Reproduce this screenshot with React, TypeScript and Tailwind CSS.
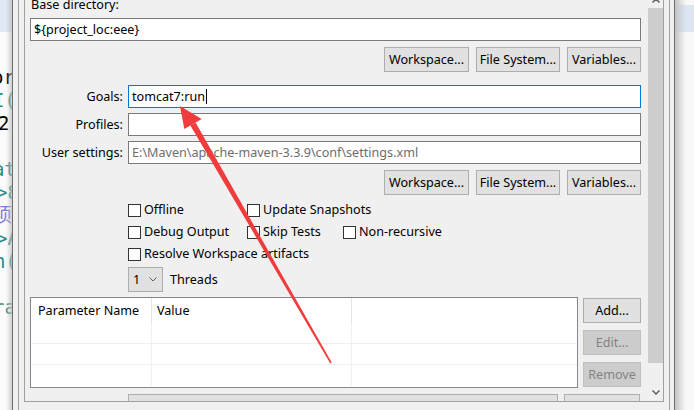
import React from "react";

const editorLines: Array<{ text: string; color: string; offset: string }> = [
  { text: "or", color: "text-black", offset: "ml-[-8px]" },
  { text: "I(", color: "text-[#2a8c8c]", offset: "ml-[-7px]" },
  { text: "2", color: "text-black", offset: "ml-[-2px]" },
  { text: "", color: "text-black", offset: "ml-0" },
  { text: "at", color: "text-[#2a8c8c]", offset: "ml-[-7px]" },
  { text: ">8", color: "text-[#2a8c8c]", offset: "ml-[-4px]" },
  { text: "项", color: "text-[#7b7bd8]", offset: "ml-[-7px]" },
  { text: ">A", color: "text-[#2a8c8c]", offset: "ml-[-4px]" },
  { text: "n(", color: "text-[#2a8c8c]", offset: "ml-[-6px]" },
  { text: "", color: "text-black", offset: "ml-0" },
  { text: "ra", color: "text-[#5a8c8c]", offset: "ml-[-7px]" },
];

const Button = ({
  label,
  className,
  disabled,
}: {
  label: string;
  className: string;
  disabled?: boolean;
}) => (
  <div
    className={`h-[25px] border flex items-center justify-center ${className} ${
      disabled
        ? "bg-[#cccccc] border-[#bfbfbf] text-[#838383]"
        : "bg-[#e1e1e1] border-[#adadad] text-black"
    }`}
  >
    {label}
  </div>
);

const Checkbox = ({ label }: { label: string }) => (
  <div className="flex items-center h-[22px]">
    <span className="w-[13px] h-[13px] border border-[#333333] bg-white shrink-0" />
    <span className="ml-[3px] whitespace-nowrap">{label}</span>
  </div>
);

const BrowseRow = () => (
  <div className="flex justify-end gap-[7px] mt-[6px]">
    <Button label="Workspace..." className="w-[85px]" />
    <Button label="File System..." className="w-[84px]" />
    <Button label="Variables..." className="w-[74px]" />
  </div>
);

const FieldRow = ({
  label,
  value,
  focused,
  muted,
  className,
}: {
  label: string;
  value?: string;
  focused?: boolean;
  muted?: boolean;
  className: string;
}) => (
  <div className={`flex items-center gap-[5px] ${className}`}>
    <div className="w-[93px] text-right whitespace-nowrap">{label}</div>
    <div
      className={`flex-1 h-[23px] border bg-white flex items-center px-[3px] ${
        focused ? "border-[#0078d7]" : "border-[#7a7a7a]"
      } ${muted ? "text-[#6d6d6d]" : "text-black"}`}
    >
      <span className="whitespace-nowrap">{value}</span>
      {focused && <span className="w-[1px] h-[15px] bg-black ml-[1px]" />}
    </div>
  </div>
);

const TableRow = ({ border }: { border?: boolean }) => (
  <div className={`flex h-[21px] ${border ? "border-b border-[#f0f0f0]" : ""}`}>
    <div className="w-[121px] border-r border-[#eef0f4]" />
    <div className="w-[200px] border-r border-[#eef0f4]" />
    <div className="flex-1" />
  </div>
);

export default function App() {
  return (
    <div className="relative w-[694px] h-[410px] overflow-hidden flex bg-[#f0f0f0] text-[12.6px] leading-[16px] text-black font-['Noto_Sans','Liberation_Sans',sans-serif]">
      {/* editor behind the dialog, left */}
      <div className="relative w-[12px] h-[410px] overflow-hidden bg-[#fbfbfb] shrink-0">
        <div className="h-[32px] bg-[#dfe8f4]" />
        <div className="pt-[34px] font-['DejaVu_Sans_Mono','Noto_Sans_CJK_SC',monospace] text-[19px]">
          {editorLines.map((l, i) => (
            <div key={i} className={`h-[23px] leading-[23px] whitespace-nowrap ${l.offset} ${l.color}`}>
              {l.text}
            </div>
          ))}
        </div>
        <div className="absolute inset-y-0 right-0 w-[6px] bg-gradient-to-r from-transparent to-[#bdbdbd]/70" />
      </div>

      {/* dialog frame */}
      <div className="w-[663px] h-[410px] shrink-0 border-l border-r border-[#6e6e6e] pl-[5px] pr-[4px]">
        <div className="h-[410px] border-l border-r border-[#a0a0a0] px-[5px]">
          <div className="h-[402px] border-l border-r border-b border-[#a0a0a0] flex overflow-hidden">
            {/* scrolled content */}
            <div className="flex-1 pl-[5px] pr-[6px] overflow-hidden">
              <div className="h-[16px] mt-[-3px] ml-[1px] whitespace-nowrap">Base directory:</div>
              <div className="h-[23px] mt-[5px] border border-[#7a7a7a] bg-white flex items-center px-[3px]">
                {"${project_loc:eee}"}
              </div>
              <BrowseRow />

              <FieldRow label="Goals:" value="tomcat7:run" focused className="mt-[13px]" />
              <FieldRow label="Profiles:" className="mt-[5px]" />
              <FieldRow
                label="User settings:"
                value="E:\Maven\apache-maven-3.3.9\conf\settings.xml"
                muted
                className="mt-[5px]"
              />
              <BrowseRow />

              <div className="mt-[4px] ml-[98px] grid grid-cols-[119px_96px_1fr]">
                <Checkbox label="Offline" />
                <Checkbox label="Update Snapshots" />
                <div />
                <Checkbox label="Debug Output" />
                <Checkbox label="Skip Tests" />
                <Checkbox label="Non-recursive" />
                <div className="col-span-3">
                  <Checkbox label="Resolve Workspace artifacts" />
                </div>
              </div>

              <div className="mt-[2px] ml-[98px] flex items-center">
                <div className="w-[35px] h-[25px] border border-[#adadad] bg-[#e1e1e1] flex items-center justify-between pl-[4px] pr-[5px]">
                  <span>1</span>
                  <svg width="8" height="5" viewBox="0 0 8 5">
                    <path d="M0.5 0.5 L4 4 L7.5 0.5" fill="none" stroke="#606060" strokeWidth="1" />
                  </svg>
                </div>
                <span className="ml-[7px]">Threads</span>
              </div>

              <div className="mt-[5px] flex gap-[5px]">
                <div className="flex-1 h-[91px] border border-[#828790] bg-white overflow-hidden">
                  <div className="flex h-[25px]">
                    <div className="w-[121px] border-r border-[#e5e5e5] pl-[7px] flex items-center whitespace-nowrap">
                      Parameter Name
                    </div>
                    <div className="w-[200px] border-r border-[#e5e5e5] pl-[5px] flex items-center">
                      Value
                    </div>
                    <div className="flex-1" />
                  </div>
                  <TableRow border />
                  <TableRow border />
                  <TableRow />
                </div>
                <div className="w-[58px] pt-[1px] flex flex-col gap-[7px]">
                  <Button label="Add..." className="w-[58px]" />
                  <Button label="Edit..." className="w-[58px]" disabled />
                  <Button label="Remove" className="w-[58px]" disabled />
                </div>
              </div>

              <div className="mt-[6px] ml-[98px] flex gap-[6px]">
                <div className="w-[430px] h-[25px] border border-[#adadad] bg-[#e1e1e1] shrink-0" />
                <div className="w-[76px] h-[25px] border border-[#adadad] bg-[#e1e1e1] shrink-0" />
              </div>
            </div>

            {/* vertical scrollbar */}
            <div className="w-[16px] shrink-0 flex flex-col bg-[#f0f0f0] pl-[1px]">
              <div className="h-[8px] flex justify-center">
                <svg width="8" height="5" viewBox="0 0 8 5" className="mt-[-2px]">
                  <path d="M0.5 4.5 L4 1 L7.5 4.5" fill="none" stroke="#606060" strokeWidth="1.5" />
                </svg>
              </div>
              <div className="h-[355px] bg-[#cdcdcd]" />
              <div className="flex-1 flex justify-center items-end pb-[6px]">
                <svg width="8" height="5" viewBox="0 0 8 5">
                  <path d="M0.5 0.5 L4 4 L7.5 0.5" fill="none" stroke="#606060" strokeWidth="1.5" />
                </svg>
              </div>
            </div>
          </div>
        </div>
      </div>

      {/* editor behind the dialog, right */}
      <div className="relative flex-1 h-[410px] bg-[#f8f8f8]">
        <div className="mt-[5px] h-[27px] bg-[#dce6f3]" />
        <div className="absolute inset-y-0 left-0 w-[11px] bg-gradient-to-r from-[#c4c4c4] to-transparent" />
      </div>

      {/* red annotation arrow */}
      <svg
        className="absolute inset-0 pointer-events-none"
        width="694"
        height="410"
        viewBox="0 0 694 410"
      >
        <polygon points="195.6,122.5 331.7,362.6 330.3,363.4 190.4,125.5" fill="#f03c3c" />
        <polygon points="180,106 201.7,119 184.3,129" fill="#f03c3c" />
      </svg>
    </div>
  );
}
